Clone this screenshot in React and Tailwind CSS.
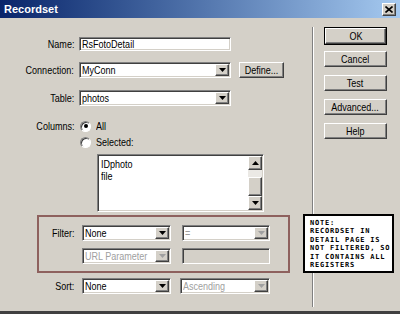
import React from "react";

const sunken =
  "border border-t-[#808080] border-l-[#808080] border-b-white border-r-white shadow-[inset_1px_1px_0_#404040,inset_-1px_-1px_0_#d4d0c8]";
const raised =
  "border border-t-white border-l-white border-b-[#404040] border-r-[#404040] shadow-[inset_-1px_-1px_0_#808080]";

// the dialog font is narrow (Tahoma, squeezed); squeeze Liberation Sans to match
const T = ({ children, origin = "origin-left", className = "" }) => (
  <span className={`inline-block whitespace-nowrap scale-x-[0.82] ${origin} ${className}`}>{children}</span>
);

const Arrow = ({ dir = "down", disabled = false }) => (
  <svg width="7" height="4" viewBox="0 0 7 4" className={dir === "up" ? "rotate-180" : ""}>
    <path d="M0 0h7L3.5 4z" fill={disabled ? "#a0a0a0" : "#000"} />
  </svg>
);

const Select = ({ value, width, disabled = false, white = true }) => (
  <div
    className={`${sunken} h-[16px] flex items-center ${white ? "bg-white" : "bg-[#d4d0c8]"}`}
    style={{ width }}
  >
    <span className={`flex-1 pl-[2px] overflow-hidden leading-none ${disabled ? "text-[#a0a0a0]" : "text-black"}`}>
      <T>{value}</T>
    </span>
    <div className={`${raised} bg-[#d4d0c8] w-[14px] h-[12px] mr-[1px] flex items-center justify-center`}>
      <Arrow disabled={disabled} />
    </div>
  </div>
);

const Button = ({ children, width, isDefault = false }) => (
  <div
    className={`flex items-center justify-center bg-[#d4d0c8] ${
      isDefault ? "border border-black h-[18px]" : "h-[16px]"
    }`}
    style={{ width }}
  >
    <div className={`${raised} w-full h-full flex items-center justify-center leading-none`}>
      <T origin="origin-center">{children}</T>
    </div>
  </div>
);

const Radio = ({ checked }) => (
  <div className="w-[11px] h-[11px] rounded-full bg-white border border-t-[#808080] border-l-[#808080] border-b-white border-r-white shadow-[inset_1px_1px_0_#404040] flex items-center justify-center">
    {checked && <div className="w-[4px] h-[4px] rounded-full bg-black" />}
  </div>
);

const Label = ({ children, w = "w-[74px]" }) => (
  <span className={`${w} text-right leading-none`}>
    <T origin="origin-right">{children}</T>
  </span>
);

export default function App() {
  return (
    <div className="w-[400px] h-[314px] bg-[#d4d0c8] flex flex-col overflow-hidden text-[11px] text-black font-['Liberation_Sans',Arial,sans-serif] border-b-[3px] border-b-[#404040] relative">
      {/* Title bar */}
      <div className="h-[18px] flex items-center justify-between bg-gradient-to-r from-[#0a246a] to-[#a6caf0] pl-[4px] pr-[4px]">
        <span className="text-white font-bold text-[11px]">Recordset</span>
        <div className={`${raised} bg-[#d4d0c8] w-[14px] h-[13px] flex items-center justify-center`}>
          <svg width="8" height="7" viewBox="0 0 8 7">
            <path d="M0.5 0.5l7 6M7.5 0.5l-7 6" stroke="#000" strokeWidth="1.6" />
          </svg>
        </div>
      </div>

      {/* Body */}
      <div className="flex flex-1">
        <div className="w-[312px] flex flex-col">
          <div className="flex items-center mt-[19px]">
            <Label>Name:</Label>
            <div className={`${sunken} bg-white w-[152px] h-[14px] ml-[5px] flex items-center pl-[2px] leading-none`}>
              <T>RsFotoDetail</T>
            </div>
          </div>

          <div className="flex items-center mt-[11px]">
            <Label>Connection:</Label>
            <div className="ml-[5px]">
              <Select value="MyConn" width={152} />
            </div>
            <div className="ml-[8px]">
              <Button width={45}>Define...</Button>
            </div>
          </div>

          <div className="flex items-center mt-[12px]">
            <Label>Table:</Label>
            <div className="ml-[5px]">
              <Select value="photos" width={152} />
            </div>
          </div>

          <div className="flex items-center mt-[14px] h-[12px]">
            <Label>Columns:</Label>
            <div className="ml-[6px]">
              <Radio checked />
            </div>
            <span className="ml-[5px] leading-none">
              <T>All</T>
            </span>
          </div>
          <div className="flex items-center mt-[4px] h-[12px]">
            <div className="ml-[80px]">
              <Radio />
            </div>
            <span className="ml-[5px] leading-none">
              <T>Selected:</T>
            </span>
          </div>

          <div className={`${sunken} bg-white ml-[97px] mt-[6px] w-[167px] h-[58px] flex`}>
            <div className="flex-1 pl-[3px] pt-[3px] leading-[12px]">
              <div>
                <T>IDphoto</T>
              </div>
              <div>
                <T>file</T>
              </div>
            </div>
            <div className="w-[14px] flex flex-col mt-[1px] mb-[1px] mr-[1px]">
              <div className={`${raised} bg-[#d4d0c8] h-[14px] flex items-center justify-center`}>
                <Arrow dir="up" />
              </div>
              <div className="h-[7px] bg-[#ebe9e5]" />
              <div className={`${raised} bg-[#d4d0c8] h-[20px]`} />
              <div className="flex-1 bg-[#ebe9e5]" />
              <div className={`${raised} bg-[#d4d0c8] h-[14px] flex items-center justify-center`}>
                <Arrow />
              </div>
            </div>
          </div>

          {/* Filter group */}
          <div className="ml-[37px] mt-[3px] w-[253px] h-[58px] border-2 border-[#8e615e] flex flex-col">
            <div className="flex items-center mt-[8px]">
              <Label w="w-[35px]">Filter:</Label>
              <div className="ml-[8px]">
                <Select value="None" width={89} />
              </div>
              <div className="ml-[11px]">
                <Select value="=" width={88} disabled />
              </div>
            </div>
            <div className="flex items-center mt-[7px]">
              <div className="ml-[43px]">
                <Select value="URL Parameter" width={89} disabled />
              </div>
              <div className={`${sunken} ml-[11px] w-[88px] h-[16px] bg-[#d4d0c8]`} />
            </div>
          </div>

          <div className="flex items-center mt-[5px]">
            <Label>Sort:</Label>
            <div className="ml-[8px]">
              <Select value="None" width={89} />
            </div>
            <div className="ml-[9px]">
              <Select value="Ascending" width={90} disabled />
            </div>
          </div>
        </div>

        {/* Separator */}
        <div className="w-[2px] mt-[9px] mb-[4px] border-l border-l-[#808080] border-r border-r-white" />

        {/* Buttons */}
        <div className="ml-[10px] mt-[9px] flex flex-col gap-[6px]">
          <Button width={63} isDefault>OK</Button>
          <div className="flex flex-col gap-[8px]">
            <Button width={63}>Cancel</Button>
            <Button width={63}>Test</Button>
            <Button width={63}>Advanced...</Button>
            <Button width={63}>Help</Button>
          </div>
        </div>
      </div>

      {/* Note overlay */}
      <div className="absolute left-[303px] top-[214px] w-[91px] h-[59px] bg-white border-2 border-black pl-[5px] pt-[3px] font-['DejaVu_Sans_Mono',monospace] text-[7px] font-bold leading-[8.4px] uppercase tracking-[0.8px]">
        <div>Note:</div>
        <div>Recordset in</div>
        <div>detail page is</div>
        <div>not filtered, so</div>
        <div>it contains all</div>
        <div>registers</div>
      </div>
    </div>
  );
}
